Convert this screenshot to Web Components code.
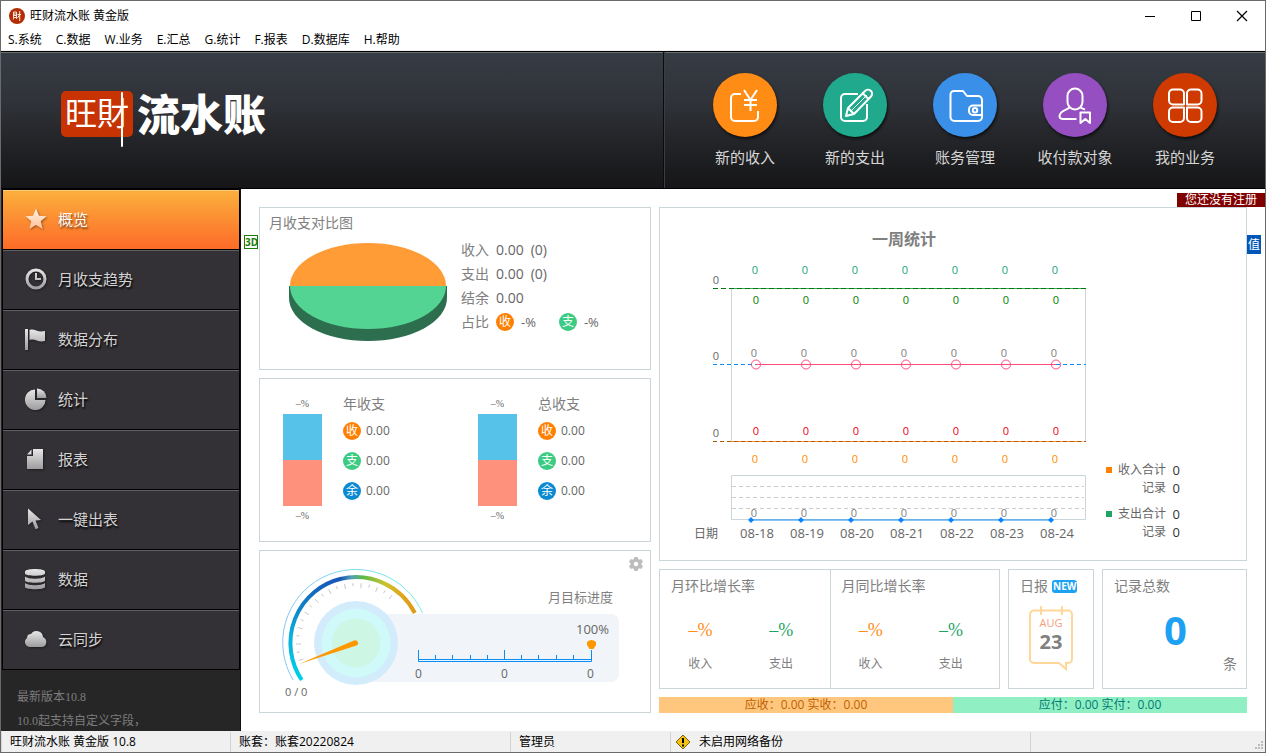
<!DOCTYPE html>
<html lang="zh-CN">
<head>
<meta charset="utf-8">
<title>旺财流水账 黄金版</title>
<style>
  body { margin: 0; background: #fff; font: 12px/20px "Open Sans", "Noto Sans CJK SC", sans-serif; color: #666; }
</style>
</head>
<body>
<app-window></app-window>
<script>
const RESET = `*{box-sizing:border-box} button{font:inherit;color:inherit;background:none;border:0;margin:0;padding:0;cursor:pointer} a{color:inherit;text-decoration:none} h1,h2,h3,p,ul,dl,dd,dt{margin:0;padding:0;font-weight:400;list-style:none;font-size:inherit} svg{display:block}`;

function define(name, css, markup) {
  customElements.define(name, class extends HTMLElement {
    connectedCallback() {
      if (this.shadowRoot) return;
      const root = this.attachShadow({ mode: 'open' });
      root.innerHTML = `<style>${RESET}${css}</style>${typeof markup === 'function' ? markup(this) : markup}`;
    }
  });
}

/* ---------- window chrome ---------- */

define('title-bar', `
  :host{display:flex;height:29px;align-items:center;background:#fff;color:#000;padding-left:8px}
  h1{flex:1;margin-left:5px}
  button{width:46px;height:28px;display:grid;place-items:center}`,
`<svg width="16" height="16" viewBox="0 0 16 16" aria-hidden="true"><circle cx="8" cy="8" r="8" fill="#b32d05"/><g fill="none" stroke="#ffe9df" stroke-width="1"><path d="M4.500 4h3v5.500h-3zM4.500 6h3M4.500 7.500h3M5 9.500l-.8 2M7 9.500l.8 1.500M8.500 6.500h3.500M10.700 3v10M10.500 7l-2 3"/></g></svg>
<h1>旺财流水账 黄金版</h1>
<button aria-label="最小化"><svg width="12" height="12"><path d="M1 6.500h10" stroke="#000"/></svg></button>
<button aria-label="最大化"><svg width="12" height="12"><path d="M1.500 1.500h9v9h-9z" fill="none" stroke="#000"/></svg></button>
<button aria-label="关闭"><svg width="12" height="12"><path d="M1 1l10 10M11 1L1 11" stroke="#000" stroke-width="1.200"/></svg></button>`);

define('menu-bar', `
  :host{display:flex;gap:14px;height:21px;padding-left:7px;background:#fff;border-bottom:1px solid #f0f0f0;color:#000}`,
  ['S.系统','C.数据','W.业务','E.汇总','G.统计','F.报表','D.数据库','H.帮助'].map(t => `<button>${t}</button>`).join(''));

/* ---------- header ---------- */

const ACTION_ICONS = {
  income: `<path d="M28 21H22a4 4 0 0 0-4 4v19a4 4 0 0 0 4 4h19a4 4 0 0 0 4-4v-6"/><path d="M31 17l6.500 10L44 17M37.500 27v11M31 27h13M31 32h13"/>`,
  expense: `<path d="M35 21H22a4 4 0 0 0-4 4v19a4 4 0 0 0 4 4h18a4 4 0 0 0 4-4V31"/><path d="M23 43l2-8 17-17a3.800 3.800 0 0 1 6 5.500L31 41zM25 35l6 6M40 20.500l5.500 5.500"/><path d="M27 39l17-17" stroke-width="1"/>`,
  wallet: `<path d="M49 33v-6a4 4 0 0 0-4-4H34l-4-5h-9a3.500 3.500 0 0 0-3.500 3.500V44a4 4 0 0 0 4 4H45a4 4 0 0 0 4-4v-2"/><path d="M49 32.500H40a4 4 0 0 0-4 4v1.500a4 4 0 0 0 4 4h9z"/><circle cx="42" cy="37.200" r="2.200"/>`,
  person: `<rect x="24.500" y="15.500" width="15" height="21" rx="7.500"/><path d="M27 34c-2 3-10 3-10.500 9 0 2 2 3 4 3h13M37 34c2 1.500 4 2 5 2.500"/><path d="M37.500 39.500h9.500v10.500l-4.700-4-4.800 4z"/>`,
  apps: `<g stroke="#ffe3d8" stroke-width="1.500"><path d="M20 16.500h7a4 4 0 0 1 4 4V31.500H20a4 4 0 0 1-4-4v-7a4 4 0 0 1 4-4zM38 16.500h6.500a4 4 0 0 1 4 4v7a4 4 0 0 1-4 4H34V20.500a4 4 0 0 1 4-4zM20 34.500h11v10.500a4 4 0 0 1-4 4h-7a4 4 0 0 1-4-4v-6.500a4 4 0 0 1 4-4zM34 34.500h10.500a4 4 0 0 1 4 4v6.500a4 4 0 0 1-4 4h-6.500a4 4 0 0 1-4-4z"/></g>`
};

define('quick-action', `
  :host{display:block;width:110px}
  button{width:100%;display:grid;justify-items:center;gap:10px;font-size:15px;color:#d6d6d6}
  .disc{width:64px;height:64px;border-radius:32px;background:var(--disc);box-shadow:1px 2px 3px #000a}
  g{fill:none;stroke:#fff;stroke-width:2;stroke-linejoin:round}`,
  el => `<button><span class="disc"><svg width="64" height="64" viewBox="0 0 64 64" aria-hidden="true"><g>${ACTION_ICONS[el.getAttribute('icon')]}</g></svg></span><slot></slot></button>`);

define('app-header', `
  :host{display:flex;height:138px;background:linear-gradient(#363c45,#303339 35%,#1f2023 75%,#161618);border-top:1px solid #000;border-bottom:1px solid #000;box-shadow:inset 0 1px #6a6f70}
  .brand{flex:1;display:flex;gap:4px;padding:39px 0 0 60px;color:#fff;border-right:1px solid #0b0b0c}
  .seal{position:relative;width:72px;height:46px;border-radius:5px;background:#c73303;font-size:32px;line-height:44px;text-align:center}
  .seal svg{position:absolute;left:59px;top:0}
  .name{font-size:43px;line-height:48px;font-weight:900}
  nav{display:flex;padding:21px 25px 0;border-left:1px solid #3a3e43}`,
`<div class="brand"><div class="seal">旺財<svg width="4" height="56" aria-hidden="true"><path d="M2 2v53" stroke="#fff" stroke-width="2" stroke-linecap="round"/></svg></div><div class="name">流水账</div></div>
<nav>
<quick-action icon="income" style="--disc:#ff8c14">新的收入</quick-action>
<quick-action icon="expense" style="--disc:#20a98c">新的支出</quick-action>
<quick-action icon="wallet" style="--disc:#3a90e8">账务管理</quick-action>
<quick-action icon="person" style="--disc:#954fc0">收付款对象</quick-action>
<quick-action icon="apps" style="--disc:#cf3a00">我的业务</quick-action>
</nav>`);

/* ---------- sidebar ---------- */

const NAV_ICONS = {
  star: `<path d="M11 .5l3 7.300 7.700.5-6 5 2 7.700L11 17l-6.700 4 2-7.700-6-5L8 7.800z"/>`,
  clock: `<path fill-rule="evenodd" d="M11 .5a10.500 10.500 0 1 1 0 21 10.500 10.500 0 0 1 0-21zm0 3a7.500 7.500 0 1 0 0 15 7.500 7.500 0 0 0 0-15zM10 5h2v5h4v2h-6z"/>`,
  flag: `<path d="M0 1h3v21H0zM4.500 2c5-2 8 3 15.500 1v10c-7 2-10-3-15.500-1z"/>`,
  pie: `<path d="M10 1.500V12h10.500A10.300 10.300 0 1 1 10 1.500z"/><path d="M12 .5A9.500 9.500 0 0 1 21.500 10H12z"/>`,
  page: `<path d="M8 1h10v20H2V8h6zM6.500 1.500V6.500H2z"/>`,
  cursor: `<path d="M3 .5L16 12l-5.500.5 3 7.500-3 1.200-3-7.700L3 17z"/>`,
  data: `<path d="M0 3.500C0 0 20 0 20 3.500V5.500C20 8.500 0 8.500 0 5.500zM0 8.500c3 3 17 3 20 0v4c0 3-20 3-20 0zM0 15c3 3 17 3 20 0v4c0 3-20 3-20 0z"/>`,
  cloud: `<path d="M5 19a5 5 0 0 1-3-9 4 4 0 0 1 4-4 6.500 6.500 0 0 1 12 3c5 2 4 10-1 10z"/>`
};

define('nav-item', `
  :host{display:block}
  a{display:flex;align-items:center;gap:11px;height:60px;padding:0 0 2px 22px;font-size:15px;color:#d2d2d2;background:#343136;border-bottom:1px solid #000;box-shadow:inset 0 1px #5f5e62;text-shadow:1px 2px 2px #000}
  :host([active]) a{background:linear-gradient(#fbb03d,#fd6b28);box-shadow:inset 0 1px #fcc777;color:#fff;text-shadow:1px 2px 2px #7a3a10}
  svg{filter:drop-shadow(1px 1px 1px #0006)}`,
  el => {
    const on = el.hasAttribute('active');
    return `<a href="#"${on ? ' aria-current="page"' : ''}><svg width="22" height="22" viewBox="0 0 22 22" aria-hidden="true"><defs><linearGradient id="f" x2="0" y2="1"><stop stop-color="${on ? '#fff3e4' : '#e8e8e8'}"/><stop offset="1" stop-color="${on ? '#ffc196' : '#9c9c9e'}"/></linearGradient></defs><g fill="url(#f)">${NAV_ICONS[el.getAttribute('icon')]}</g></svg><slot></slot></a>`;
  });

define('side-bar', `
  :host{display:block;width:240px;flex:none;background:#262626;border-right:1px solid #111}
  nav{margin-left:1px;border:1px solid #000;border-bottom:0}
  .note{height:60px;overflow:hidden;padding:15px 0 0 16px;line-height:24px;color:#7d7d7d;font-family:"Liberation Serif","Noto Sans CJK SC",serif}`,
`<nav>
<nav-item icon="star" active>概览</nav-item>
<nav-item icon="clock">月收支趋势</nav-item>
<nav-item icon="flag">数据分布</nav-item>
<nav-item icon="pie">统计</nav-item>
<nav-item icon="page">报表</nav-item>
<nav-item icon="cursor">一键出表</nav-item>
<nav-item icon="data">数据</nav-item>
<nav-item icon="cloud">云同步</nav-item>
</nav>
<div class="note"><p>最新版本10.8</p><p>10.0起支持自定义字段，</p></div>`);

/* ---------- shared pieces ---------- */

define('dot-badge', `
  :host{display:inline-grid;place-items:center;flex:none;width:18px;height:18px;border-radius:9px;background:var(--dot);color:#fff;font-size:12px;line-height:18px}`,
  `<slot></slot>`);

const INC = '<dot-badge style="--dot:#ff7f00">收</dot-badge>';
const EXP = '<dot-badge style="--dot:#3bcb83">支</dot-badge>';
const BAL = '<dot-badge style="--dot:#0b8ad2">余</dot-badge>';
const CARD = ':host{display:block;background:#fff;border:1px solid #cbd6da}';

/* ---------- month comparison ---------- */

define('month-pie', `${CARD}
  :host{padding:5px 9px}
  h2{font-size:14px;color:#808080}
  .row{display:flex;gap:13px;margin:5px 0 0 19px}
  svg{margin-top:5px;flex:none}
  dl{display:grid;grid-template-columns:28px auto;column-gap:7px;font-size:14px;line-height:24px;align-content:start}
  dt{color:#808080} dd{display:flex;gap:7px;align-items:center}
  small{font-size:13px} small+dot-badge{margin-left:16px}`,
`<h2>月收支对比图</h2>
<div class="row">
<svg width="160" height="100" viewBox="0 0 160 100" role="img" aria-label="月收支对比图">
<path d="M1 43v12a79 43 0 0 0 158 0V43z" fill="#2c6e4e"/>
<path d="M2 43a78 43 0 0 1 156 0z" fill="#ff9c36"/><path d="M2 43a78 43 0 0 0 156 0z" fill="#53d493"/>
</svg>
<dl><dt>收入</dt><dd><span>0.00</span><span>(0)</span></dd><dt>支出</dt><dd><span>0.00</span><span>(0)</span></dd><dt>结余</dt><dd><span>0.00</span></dd><dt>占比</dt><dd>${INC}<small>-%</small>${EXP}<small>-%</small></dd></dl>
</div>`);

/* ---------- yearly / total split ---------- */

define('split-bar', `
  :host{display:flex;gap:21px;padding:15px 0 0 23px}
  .bar{width:39px;text-align:center;font:10px/20px "Liberation Serif",serif}
  .bar i{display:block;height:46px;background:#56c1e9} .bar i+i{background:#fd917b}
  h2{font-size:14px;color:#808080;margin-bottom:2px}
  li{display:flex;gap:5px;align-items:center;height:30px}`,
  el => `<div class="bar">–%<i></i><i></i>–%</div><div><h2>${el.getAttribute('label')}</h2><ul><li>${INC}0.00</li><li>${EXP}0.00</li><li>${BAL}0.00</li></ul></div>`);

define('split-card', `${CARD} :host{display:grid;grid-template-columns:1fr 1fr}`,
  `<split-bar label="年收支"></split-bar><split-bar label="总收支"></split-bar>`);

/* ---------- monthly target ---------- */

const gaugeTicks = Array.from({ length: 19 }, (_, i) => {
  const a = (197 - i * 8) * Math.PI / 180, r0 = i % 2 ? 57 : 55, c = Math.cos(a), s = Math.sin(a);
  return `M${(74 + r0 * c).toFixed(1)} ${(77 - r0 * s).toFixed(1)}L${(74 + 60 * c).toFixed(1)} ${(77 - 60 * s).toFixed(1)}`;
}).join('');
const rulerTicks = [1, 2, 3, 4, 6, 7, 8, 9].map(i => `M${6.5 + Math.round(i * 17.2)} 16v4`).join('');

define('target-card', `${CARD}
  :host{display:grid;grid-template-columns:144px 1fr;padding-left:22px}
  .gauge{position:relative;z-index:1;margin-top:15px}
  text{font-size:12px;fill:#666}
  .side{display:grid;align-content:start}
  button{justify-self:end;margin:5px 6px 15px 0}
  h2{font-size:13px;color:#808080;text-align:right;margin-right:37px}
  .box{height:68px;margin:7px 31px 0 -71px;padding-top:5px;border-radius:8px;background:#f1f5f9}
  .box p{font-size:13px;text-align:right;margin-right:10px}
  .box svg{margin:0 21px 0 auto}`,
`<svg class="gauge" width="144" height="138" viewBox="0 0 144 138" role="img" aria-label="目标进度">
<defs><linearGradient id="l" x2="0" y1="1" y2="0"><stop stop-color="#00d0ea"/><stop offset=".45" stop-color="#0aaeda"/><stop offset="1" stop-color="#1656b6"/></linearGradient>
<linearGradient id="r"><stop stop-color="#1656b6"/><stop offset=".15" stop-color="#55a0b8"/><stop offset=".3" stop-color="#5cba48"/><stop offset=".6" stop-color="#c8c42c"/><stop offset=".8" stop-color="#e0a81c"/><stop offset="1" stop-color="#dd9a18"/></linearGradient>
<linearGradient id="o"><stop stop-color="#86c4f5"/><stop offset="1" stop-color="#70f0e6"/></linearGradient></defs>
<circle cx="74" cy="77" r="42" fill="#d3ecfb"/><circle cx="74" cy="77" r="34.500" fill="#d0fafa"/><circle cx="74" cy="77" r="24.500" fill="#cef6e4"/>
<path d="M11.100 114A73 73 0 1 1 140.500 47" fill="none" stroke="url(#o)" stroke-width="1"/>
<path d="M19.800 114A66 66 0 0 1 59 12.800" fill="none" stroke="url(#l)" stroke-width="4"/>
<path d="M58.500 12.900A66 66 0 0 1 132.800 47" fill="none" stroke="url(#r)" stroke-width="4"/>
<path d="${gaugeTicks}" stroke="#c8c8c8"/>
<path d="M17 98L72 74.600a2.600 2.600 0 0 1 2.500 5z" fill="#ff9800"/>
<text x="3" y="130" style="font-size:11px">0 / 0</text></svg>
<div class="side">
<button aria-label="设置"><svg width="16" height="16" viewBox="0 0 16 16"><path fill="#bdbdbd" fill-rule="evenodd" d="M6.300 1h3.400l.4 2 1.300.8 2-.8 1.600 2.800L13.500 7.200v1.600l1.500 1.400-1.600 2.800-2-.8-1.300.8-.4 2H6.300l-.4-2-1.300-.8-2 .8L1 10.200l1.500-1.400V7.200L1 5.800 2.600 3l2 .8L5.900 3zM8 5.800a2.200 2.200 0 1 0 0 4.400 2.200 2.200 0 0 0 0-4.400z"/></svg></button>
<h2>月目标进度</h2>
<div class="box"><p>100%</p>
<svg width="186" height="43" viewBox="0 0 186 43" role="img" aria-label="进度标尺"><path d="M6.500 11v11.500h173V11M6.500 20.500h173M92.500 11v9${rulerTicks}" fill="none" stroke="#0a8cf5"/><path d="M175 3q4.500-4 9 0v3l-2.500 4h-4L175 6z" fill="#ff9800"/><g text-anchor="middle"><text x="6.500" y="39">0</text><text x="92.500" y="39">0</text><text x="178.500" y="39">0</text></g></svg></div>
</div>`);

/* ---------- week chart ---------- */

const days = ['08-18', '08-19', '08-20', '08-21', '08-22', '08-23', '08-24'];
const series = (x, y, color) => `<g fill="${color}">${days.map((_, i) => `<text x="${x + i * 50}" y="${y}">0</text>`).join('')}</g>`;

define('week-chart', `${CARD}
  :host{display:flex;padding:21px 0 0 30px}
  h2{font-size:16px;font-weight:700;color:#808080;text-align:center;padding-left:26px;margin-bottom:9px}
  text{font-size:11px;text-anchor:middle} .day text{font-size:13px} .day .cap{font-size:12px}
  dl{display:grid;grid-template-columns:6px 48px 8px;column-gap:6px;align-self:end;margin:0 0 19px 14px;line-height:18px;text-align:right}
  i{width:6px;height:6px;background:var(--k);align-self:center} dt{grid-column:2} i+dt{grid-column:auto} dd{color:#333;font-size:13px}
  .gap{height:8px;grid-column:1/-1}`,
`<div><h2>一周统计</h2>
<svg width="402" height="290" viewBox="0 0 402 290" role="img" aria-label="一周统计">
<path d="M41.500 30v153.500h354V30" fill="none" stroke="#cbd6da"/>
<path d="M41 30.500h351" stroke="#35a877"/><path d="M23 30.500h373" stroke="#007a00" stroke-dasharray="5 3"/>
<path d="M23 106.500h373" stroke="#0a8cf5" stroke-dasharray="4 3"/><path d="M66 106.500h300" stroke="#ff4d7d"/>
<path d="M41 183.500h351" stroke="#ff8c14"/><path d="M23 183.500h373" stroke="#a85a0a" stroke-dasharray="4 3"/>
<g fill="none" stroke="#ff4d7d">${days.map((_, i) => `<circle cx="${66 + i * 50}" cy="106.500" r="4.500"/>`).join('')}</g>
<g fill="#666"><text x="26" y="26">0</text><text x="26" y="102">0</text><text x="26" y="179">0</text></g>
${series(65, 16, '#1aa57c')}${series(66, 46, '#008000')}${series(64, 99, '#808080')}${series(66, 177, '#f00020')}${series(65, 205, '#ff8c00')}
<path d="M41.500 217.500h354v44h-354z" fill="none" stroke="#cbd6da"/>
<path d="M42 228.500h352M42 239.500h352M42 250.500h352" stroke="#ccc" stroke-dasharray="4 3"/>
${series(64, 259, '#808080')}
<path d="M61 262h300" stroke="#0a8cf5" stroke-width="1"/>
<g fill="#0a84ff">${days.map((_, i) => `<path d="M${61 + i * 50} 259l3 3-3 3-3-3z"/>`).join('')}</g>
<g class="day" fill="#666"><text class="cap" x="16" y="280">日期</text>${days.map((d, i) => `<text x="${67 + i * 50}" y="280">${d}</text>`).join('')}</g>
</svg></div>
<dl><i style="--k:#ff7f00"></i><dt>收入合计</dt><dd>0</dd><dt>记录</dt><dd>0</dd><div class="gap"></div><i style="--k:#1fa463"></i><dt>支出合计</dt><dd>0</dd><dt>记录</dt><dd>0</dd></dl>`);

/* ---------- summary cards ---------- */

define('growth-rate', `
  :host{display:block;padding:6px 8px 0 0}
  h2{font-size:14px;color:#808080;padding-left:11px}
  dl{display:grid;grid-template-columns:1fr 1fr;text-align:center;margin-top:20px}
  dl div{display:flex;flex-direction:column-reverse;gap:10px;color:#808080}
  dd{font:18px/28px "Liberation Serif",serif;color:#ff8c14} div+div dd{color:#1fa463}`,
  el => `<h2>${el.getAttribute('label')}</h2><dl><div><dt>收入</dt><dd>–%</dd></div><div><dt>支出</dt><dd>–%</dd></div></dl>`);

define('growth-card', `${CARD} :host{display:grid;grid-template-columns:1fr 1fr} growth-rate+growth-rate{border-left:1px solid #cbd6da}`,
  `<growth-rate label="月环比增长率"></growth-rate><growth-rate label="月同比增长率"></growth-rate>`);

define('daily-card', `${CARD}
  :host{padding:6px 0 0 11px}
  h2{display:flex;align-items:center;gap:4px;font-size:14px;color:#808080}
  b{font-size:10px;line-height:13px;background:#1da1f2;color:#fff;border-radius:3px;padding:0 1px}
  a{display:block;margin:10px 0 0 9px}`,
`<h2>日报 <b>NEW</b></h2><a href="#" aria-label="日报"><svg width="44" height="66" viewBox="0 0 44 66"><path d="M5 4.500h34a4 4 0 0 1 4 4V53a4 4 0 0 1-4 4h-2v6l-7-6H5a4 4 0 0 1-4-4V8.500a4 4 0 0 1 4-4zM12 0v9M33 0v9" fill="none" stroke="#ffd799" stroke-width="2"/><g text-anchor="middle"><text x="22" y="21" font-size="11" fill="#f5a07c">AUG</text><text x="22" y="43" font-size="20" font-weight="700" fill="#808080">23</text></g></svg></a>`);

define('total-card', `${CARD}
  :host{padding:6px 9px 0 11px;font-size:14px;color:#808080}
  strong{display:block;font-size:40px;line-height:48px;margin-top:10px;text-align:center;color:#1da1f2}
  p{text-align:right}`,
`<h2>记录总数</h2><strong>0</strong><p>条</p>`);

define('due-bar', `
  :host{display:grid;grid-template-columns:1fr 1fr;line-height:16px;text-align:center}
  p{background:#ffc77e;color:#bf6000} p+p{background:#91f0c3;color:#007a74}`,
`<p>应收：0.00 实收：0.00</p><p>应付：0.00 实付：0.00</p>`);

/* ---------- page ---------- */

define('dash-board', `
  :host{flex:1;min-width:0;position:relative;display:grid;grid-template-columns:2fr 3fr;gap:8px;padding:18px;background:#fff}
  .left,.right{display:grid;gap:8px;min-width:0}
  .left{grid-template-rows:repeat(3,1fr)} .right{grid-template-rows:1fr 120px 16px}
  .cards{display:grid;grid-template-columns:341fr 86fr 145fr;gap:8px}
  .tag{position:absolute;display:block}
  .reg{top:4px;right:0;padding:0 8px;line-height:14px;background:#800000;color:#fff}
  .val{top:46px;right:4px;width:14px;line-height:19px;text-align:center;background:#0057b8;color:#fff}
  .three{left:3px;top:46px;width:14px;line-height:12px;font-size:10px;font-weight:700;text-align:center;border:1px solid #1a7a0a;color:#1a7a0a}`,
`<div class="left"><month-pie></month-pie><split-card></split-card><target-card></target-card></div>
<div class="right"><week-chart></week-chart><div class="cards"><growth-card></growth-card><daily-card></daily-card><total-card></total-card></div><due-bar></due-bar></div>
<a href="#" class="tag reg">您还没有注册</a><button class="tag val">值</button><button class="tag three">3D</button>`);

define('status-bar', `
  :host{display:grid;grid-template-columns:229px 280px 160px 360px 1fr;height:21px;background:#f0f0f0;color:#000}
  span{display:flex;align-items:center;padding-left:8px;border-left:1px solid #d4d4d4;margin-top:1px}
  span:first-child{border-color:#f0f0f0;padding-left:4px} span:last-child{justify-content:end;align-items:end}
  svg{margin:0 8px 0 -4px} span:last-child svg{margin:0 1px 1px 0}`,
`<span>旺财流水账 黄金版 10.8</span><span>账套：账套20220824</span><span>管理员</span><span><svg width="16" height="16" viewBox="0 0 16 16" aria-hidden="true"><path d="M8 1l7 7-7 7-7-7z" fill="#f5c211" stroke="#7a6210"/><path d="M8 4v5M8 10.500v2" stroke="#000" stroke-width="2"/></svg>未启用网络备份</span><span><svg width="10" height="10" aria-hidden="true"><path d="M7 0h2v2H7zM4 3h2v2H4zM7 3h2v2H7zM1 6h2v2H1zM4 6h2v2H4zM7 6h2v2H7z" fill="#bbb"/></svg></span>`);

define('app-window', `
  :host{display:flex;flex-direction:column;min-height:100vh;box-sizing:border-box;border:1px solid #6b696b}
  main{flex:1;display:flex}`,
`<title-bar></title-bar><menu-bar></menu-bar><app-header></app-header><main><side-bar></side-bar><dash-board></dash-board></main><status-bar></status-bar>`);
</script>
</body>
</html>
